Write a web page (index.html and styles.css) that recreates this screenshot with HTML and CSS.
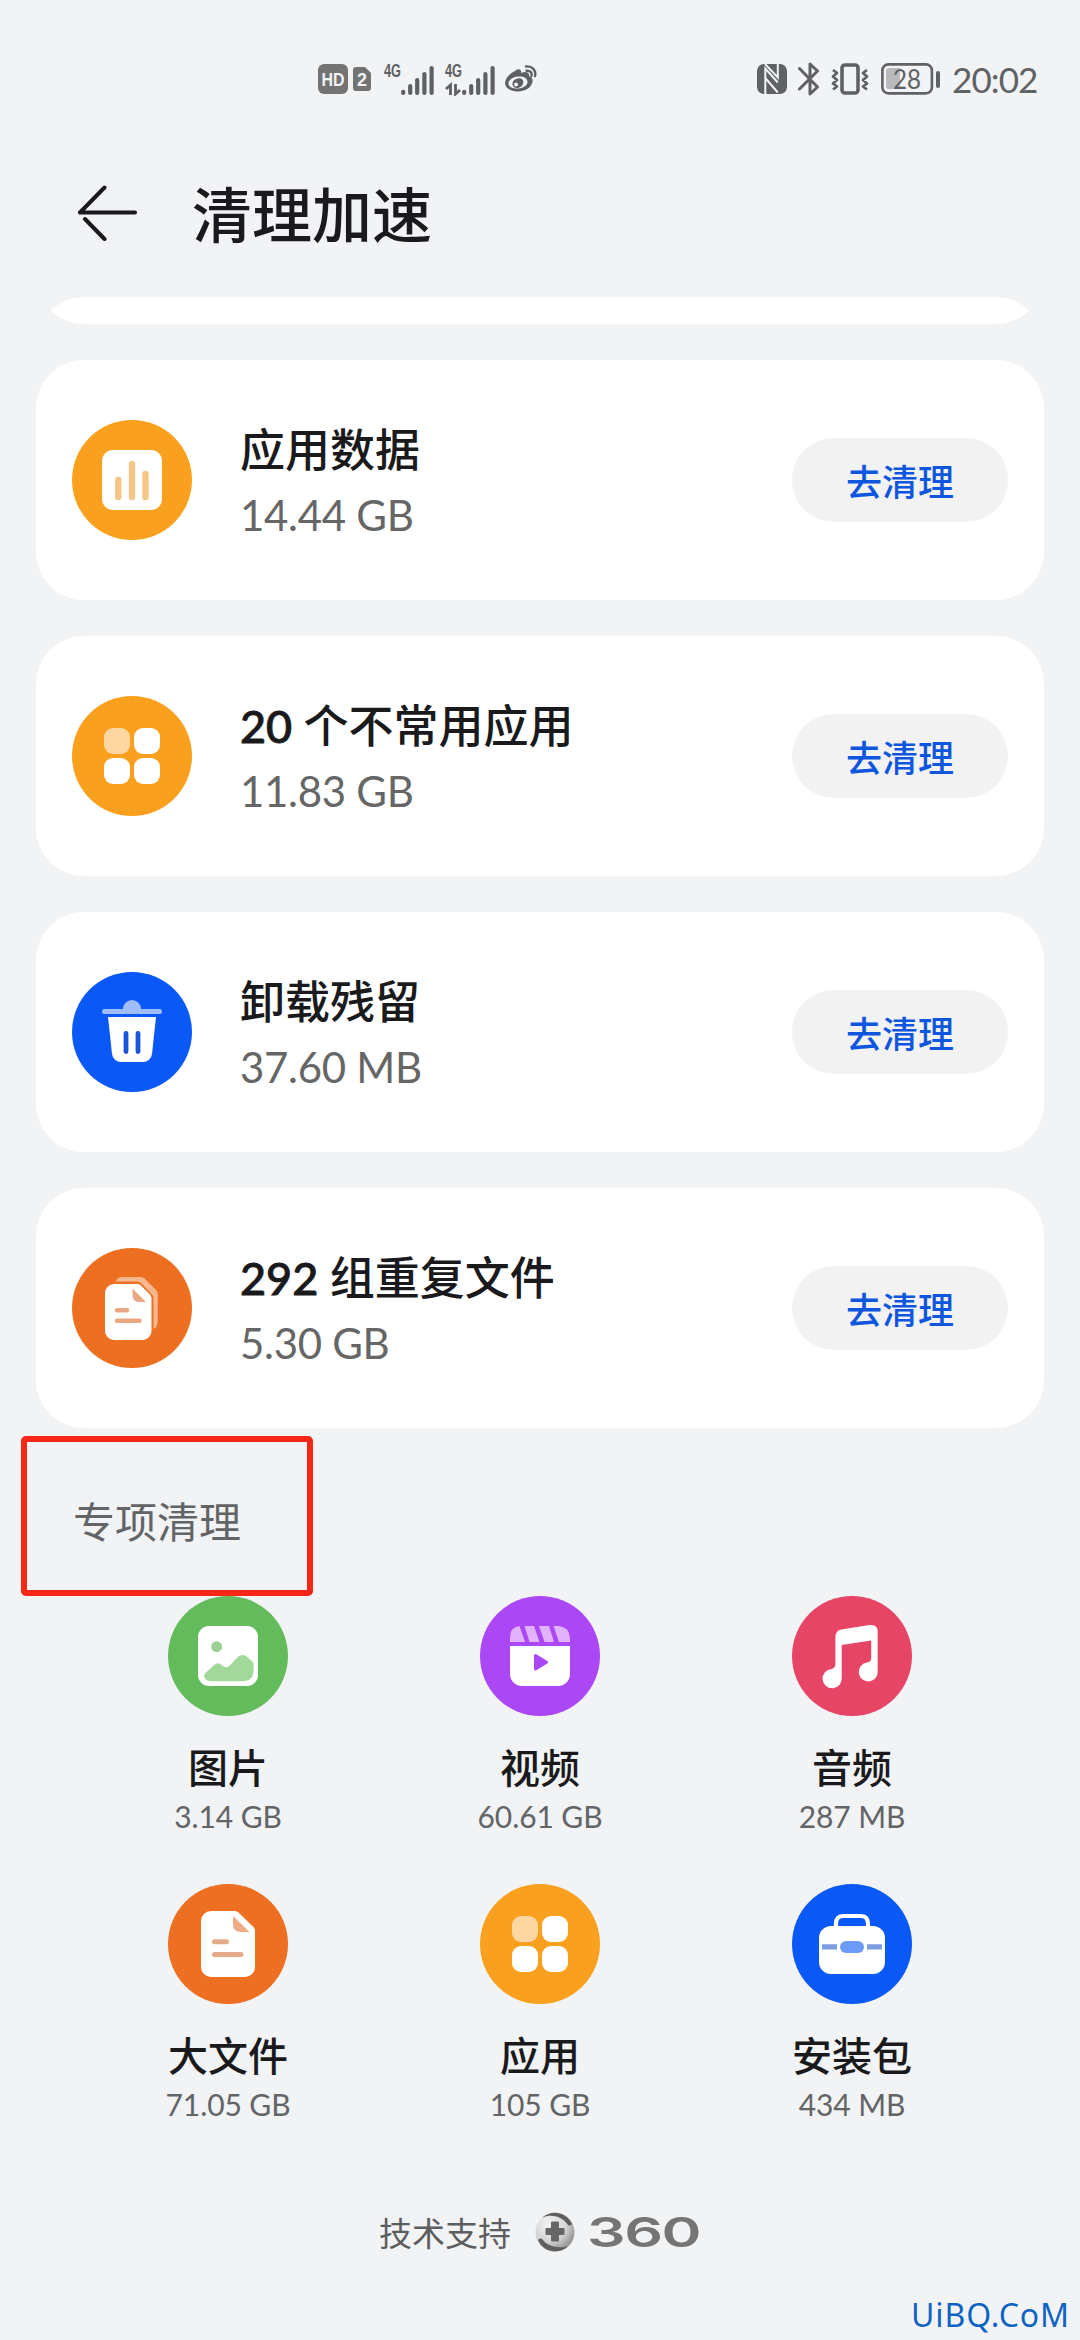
FILE: index.html
```html
<!DOCTYPE html>
<html lang="zh-CN">
<head>
<meta charset="utf-8">
<title>清理加速</title>
<link rel="stylesheet" href="styles.css">
</head>
<body>
<svg class="defs" width="0" height="0" aria-hidden="true">
  <symbol id="apps" viewBox="0 0 120 120">
    <rect x="32" y="32" width="26" height="26" rx="9" fill="#fdd6a2"/>
    <rect x="62" y="32" width="26" height="26" rx="9" fill="#fff"/>
    <rect x="32" y="62" width="26" height="26" rx="9" fill="#fff"/>
    <rect x="62" y="62" width="26" height="26" rx="9" fill="#fff"/>
  </symbol>
  <symbol id="bars" viewBox="0 0 33 32">
    <path d="M2.2 27.8v1.2M9.2 22.2v6.8M16.2 16v13M23.4 10v19M30.6 4v25" stroke="#5f6062" stroke-width="4.2" stroke-linecap="round"/>
  </symbol>
</svg>
<div class="screen">
  <header class="status">
    <div class="status-left">
      <svg width="30" height="30" viewBox="0 0 30 30"><rect width="30" height="30" rx="6" fill="#737373"/><text x="15" y="22" class="hd" text-anchor="middle" textLength="23" lengthAdjust="spacingAndGlyphs">HD</text></svg>
      <svg class="sim" width="18" height="24" viewBox="0 0 18 24"><path d="M3 0h9l6 6v15a3 3 0 0 1-3 3H3a3 3 0 0 1-3-3V3a3 3 0 0 1 3-3z" fill="#737373"/><text x="9" y="19" class="simno" text-anchor="middle">2</text></svg>
      <svg class="net" width="50" height="34" viewBox="0 0 50 34"><text x="0" y="15" class="g4" textLength="17" lengthAdjust="spacingAndGlyphs">4G</text><use href="#bars" x="17" y="2" width="33" height="32"/></svg>
      <svg class="net2" width="50" height="34" viewBox="0 0 50 34"><text x="0" y="15" class="g4" textLength="17" lengthAdjust="spacingAndGlyphs">4G</text><path d="M1 27l4.500-4v10M10.500 22v10l4.500-4" fill="none" stroke="#5f6062" stroke-width="2.800"/><use href="#bars" x="17" y="2" width="33" height="32"/></svg>
      <svg class="weibo" width="32" height="28" viewBox="0 0 32 28"><path fill-rule="evenodd" fill="#5f6062" d="M10 6C13 3 17 4 16 8c4-2 9-1 8 3 3 1 4 3 3.500 6C26 23 20 26.500 13 26.500 6 26.500 0 23 0 18 0 14 5 8 10 6zM13 11.500C7.500 12 3.500 15 3.500 18.500S8 24 13.500 23.500 23 20 22.500 16.500 18.500 11 13 11.500z"/><path fill-rule="evenodd" fill="#5f6062" d="M13 13.500c3-.8 5.500 1 5.300 4S15 23 12 23s-5-2.200-4.500-5 2.500-4 5.500-4.500zM11 17.500a2 2 0 1 0 .1 4 2 2 0 0 0-.1-4z"/><path d="M21 1.500c6-1 10.500 4 9 9.500M21.500 5.800c3.500-.6 5.800 2 5 5" fill="none" stroke="#5f6062" stroke-width="2.400" stroke-linecap="round"/></svg>
    </div>
    <div class="status-right">
      <svg width="30" height="30" viewBox="0 0 30 30"><rect width="30" height="30" rx="7" fill="#606163"/><path d="M8.300 30V4.500l12.500 14M8 0l12.800 13.500V0M8.300 14l12.500 14.500" fill="none" stroke="#f1f3f5" stroke-width="2"/></svg>
      <svg class="bt" width="22" height="34" viewBox="0 0 22 34"><path d="M1.500 6.500L19.500 25l-7.500 7V2l7.500 7L1.500 27" fill="none" stroke="#606163" stroke-width="3" stroke-linejoin="round" stroke-linecap="round"/></svg>
      <svg class="vib" width="38" height="32" viewBox="0 0 38 32"><rect x="11" y="2" width="16" height="28" rx="3" fill="none" stroke="#606163" stroke-width="3.600"/><path d="M2 7l4 3-4 3.500 4 3.500-4 3.500 4 3-4 3M36 7l-4 3 4 3.500-4 3.500 4 3.500-4 3 4 3" fill="none" stroke="#606163" stroke-width="2.800" stroke-linejoin="round"/></svg>
      <svg class="bat" width="60" height="32" viewBox="0 0 60 32"><rect x="1.400" y="1.400" width="49.500" height="29" rx="6" fill="none" stroke="#606163" stroke-width="2.600"/><path d="M8 5h11v21H8a3 3 0 0 1-3-3V8a3 3 0 0 1 3-3z" fill="#b9babb"/><rect x="55" y="8" width="4" height="17" rx="2" fill="#606163"/><text x="26" y="25.500" class="pct" text-anchor="middle" textLength="28" lengthAdjust="spacingAndGlyphs">28</text></svg>
      <span class="time">20:02</span>
    </div>
  </header>

  <div class="titlebar">
    <svg width="60" height="56" viewBox="0 0 60 56"><path d="M27.500 2.500L3 27.500h55M8 34l19.500 20" fill="none" stroke="#1a1a1c" stroke-width="4" stroke-linecap="round" stroke-linejoin="round"/></svg>
    <h1>清理加速</h1>
  </div>

  <main class="list">
    <section class="card card-cut"></section>
    <section class="card">
      <svg class="icon amber" viewBox="0 0 120 120"><rect x="30" y="30" width="60" height="60" rx="11" fill="#fff"/><path d="M46.300 60v17M60 44v33M73.500 54v23" stroke="#f4c787" stroke-width="6.400" stroke-linecap="round"/></svg>
      <div class="info"><h2>应用数据</h2><p>14.44 GB</p></div>
      <button>去清理</button>
    </section>
    <section class="card">
      <svg class="icon amber" viewBox="0 0 120 120"><use href="#apps"/></svg>
      <div class="info"><h2><span class="num">20</span> 个不常用应用</h2><p>11.83 GB</p></div>
      <button>去清理</button>
    </section>
    <section class="card">
      <svg class="icon blue" viewBox="0 0 120 120"><path d="M32.500 37H51a9 9 0 0 1 18 0h18.500a2.500 2.500 0 0 1 0 5h-55a2.500 2.500 0 0 1 0-5z" fill="#a0bdfb"/><path d="M36 45h48l-4 37a9 9 0 0 1-9 8H49a9 9 0 0 1-9-8z" fill="#fff"/><path d="M54 61.500v18M66 61.500v18" stroke="#1a55dc" stroke-width="4.800" stroke-linecap="round"/></svg>
      <div class="info"><h2>卸载残留</h2><p>37.60 MB</p></div>
      <button>去清理</button>
    </section>
    <section class="card">
      <svg class="icon orange" viewBox="0 0 120 120"><path d="M43.500 33.500q2-4.500 7-4.500H69q2 0 3.500 1.500L84 42q1.700 1.700 1.700 4v26q0 7-4.200 9V50q0-2-1.500-3.500L69 35q-1.500-1.500-4-1.500z" fill="#f7b78f"/><path d="M42 36h23.500q2 0 3.400 1.400L78 46.500q1.500 1.500 1.500 3.500v33a9 9 0 0 1-9 9H42a9 9 0 0 1-9-9V45a9 9 0 0 1 9-9z" fill="#fff"/><path d="M60.500 40.500L74 54h-7q-6.500 0-6.500-6.500zM45 60h10a2.200 2.200 0 0 1 0 4.400H45A2.200 2.200 0 0 1 45 60zM45 70.500h22.500a2.200 2.200 0 0 1 0 4.400H45a2.200 2.200 0 0 1 0-4.400z" fill="#e9a882"/></svg>
      <div class="info"><h2><span class="num">292</span> 组重复文件</h2><p>5.30 GB</p></div>
      <button>去清理</button>
    </section>
  </main>

  <h3 class="section-title">专项清理</h3>

  <div class="grid">
    <div class="cell">
      <svg class="icon green" viewBox="0 0 120 120"><rect x="30" y="30" width="60" height="60" rx="11" fill="#fff"/><circle cx="48.700" cy="50.700" r="5.500" fill="#9bcf94"/><path d="M37 77.500l9-8.500q4-3.500 8 .3 4 4 8 0l7.500-8q5-4.500 10 0l5 4.500q1 1 1 3v6q0 10-9.500 10.500H44q-6 0-7.500-3.800-.8-2 .5-4z" fill="#a2d89a"/></svg>
      <h4>图片</h4><p>3.14 GB</p>
    </div>
    <div class="cell">
      <svg class="icon purple" viewBox="0 0 120 120"><path d="M39.500 30l5.500 16H30v-4q0-11 9.500-12zM44.500 30H54l5.500 16H49.500zM59 30h10l5 16H64.500zM73.500 30H79q10 1 11 12v4H79z" fill="#e0b3fc"/><path d="M30 50h60v28a12 12 0 0 1-12 12H42a12 12 0 0 1-12-12z" fill="#fff"/><path d="M55.500 59.500v13.500l11-6.800z" fill="#ab47f5" stroke="#ab47f5" stroke-width="3" stroke-linejoin="round"/></svg>
      <h4>视频</h4><p>60.61 GB</p>
    </div>
    <div class="cell">
      <svg class="icon red" viewBox="0 0 120 120"><path d="M43.400 41q0-6.500 6-7.500l28-4.400q8.300-1 8.300 6.400V75a9.500 9.500 0 1 1-10.500-8.500q4-.8 4-4.500V44.500L49.700 49v32.500a9.600 9.600 0 1 1-10-8.500q3.700-1.500 3.700-4.500z" fill="#fff"/></svg>
      <h4>音频</h4><p>287 MB</p>
    </div>
    <div class="cell">
      <svg class="icon orange" viewBox="0 0 120 120"><path d="M43 27h24q2 0 3.500 1.500l15 14.500q1.500 1.500 1.500 3.500V83a10 10 0 0 1-10 10H43a10 10 0 0 1-10-10V37a10 10 0 0 1 10-10z" fill="#fff"/><path d="M65 32l16.500 16H73q-8 0-8-8z" fill="#f0ab84"/><path d="M46.500 57.700h12M46.500 70.600H73" stroke="#e3ab87" stroke-width="5" stroke-linecap="round"/></svg>
      <h4>大文件</h4><p>71.05 GB</p>
    </div>
    <div class="cell">
      <svg class="icon amber" viewBox="0 0 120 120"><use href="#apps"/></svg>
      <h4>应用</h4><p>105 GB</p>
    </div>
    <div class="cell">
      <svg class="icon blue" viewBox="0 0 120 120"><path d="M44 44v-4.500q0-7.500 7.500-7.500h17q7.500 0 7.500 7.500V44" fill="none" stroke="#fff" stroke-width="4.200"/><rect x="27" y="42" width="66" height="48" rx="12" fill="#fff"/><path d="M30 60.300h15v5.200H30zM75 60.300h15v5.200H75z" fill="#7c9de0"/><rect x="48" y="57" width="24" height="12" rx="6" fill="#6c9bf9"/></svg>
      <h4>安装包</h4><p>434 MB</p>
    </div>
  </div>

  <footer>
    <span class="support">技术支持</span>
    <svg width="40" height="40" viewBox="0 0 40 40">
      <defs><radialGradient id="ball" cx=".35" cy=".3" r=".75"><stop offset="0" stop-color="#f6f6f6"/><stop offset=".6" stop-color="#d2d2d2"/><stop offset="1" stop-color="#8d8d8d"/></radialGradient></defs>
      <circle cx="20" cy="20" r="19.500" fill="url(#ball)"/>
      <path d="M7 5.500C17-3 32 0 37 12q-2 2.500-4 1C27 4 16 2 7 5.500z" fill="#5e5e5e"/>
      <path d="M33 34.500C23 43 8 40 3 28q2-2.500 4-1 8 11 26 7.500z" fill="#5e5e5e"/>
      <path d="M17 9.500h6q1 0 1 1V16h4.500q1 0 1 1v5q0 1-1 1H24v5.500q0 1-1 1h-6q-1 0-1-1V23h-4.500q-1 0-1-1v-5q0-1 1-1H16v-5.500q0-1 1-1z" fill="#666"/>
    </svg>
    <span class="brand"><span>360</span></span>
  </footer>
  <div class="highlight"></div>
  <div class="watermark">UiBQ.CoM</div>
</div>
</body>
</html>
```
FILE: styles.css
```css
* { box-sizing: border-box; margin: 0; padding: 0; }
body {
  background: #f1f3f5;
  font-family: Lato, "Noto Sans CJK SC", sans-serif;
  color: #1a1a1c;
}
svg { display: block; flex: none; }
h1, h2, h3, h4 { font-weight: 500; }
.defs { position: absolute; }
.screen { position: relative; width: 1080px; height: 2340px; overflow: hidden; }

.status { display: flex; justify-content: space-between; height: 156px; padding: 59px 44px 0 318px; }
.status-left, .status-right { display: flex; align-items: center; height: 39px; }
.sim { margin-left: 5px; }
.net { margin-left: 13px; }
.net2 { margin-left: 11px; }
.weibo { margin-left: 10px; }
.hd { font: bold 18px "Liberation Sans", sans-serif; fill: #f1f3f5; }
.simno { font: bold 18px "Liberation Sans", sans-serif; fill: #f1f3f5; }
.g4 { font: bold 18px "Liberation Sans", sans-serif; fill: #5f6062; }
.pct { font: 27px Lato, sans-serif; fill: #606163; }
.bt { margin-left: 11px; }
.vib { margin-left: 11px; }
.bat { margin-left: 12px; }
.time { margin-left: 11px; width: 84px; font-size: 35px; letter-spacing: -0.9px; line-height: 40px; color: #606163; white-space: nowrap; }

.titlebar { display: flex; align-items: center; height: 114px; padding-left: 77px; }
.titlebar h1 { margin-left: 55px; padding-top: 3px; font-size: 60px; line-height: 80px; }

.list {
  display: flex; flex-direction: column; gap: 36px;
  margin: 27px 36px 0; height: 1131px;
  border-radius: 48px 48px 0 0; overflow: hidden;
}
.card {
  flex: none; display: flex; align-items: center;
  height: 240px; padding: 0 36px;
  background: #fff; border-radius: 48px;
}
.card-cut { margin-top: -213px; }
.icon { width: 120px; height: 120px; border-radius: 50%; }
.amber { background: #f9a11e; }
.blue { background: #0a59f7; }
.orange { background: #ed6f21; }
.green { background: #64bb5c; }
.purple { background: #ab47f5; }
.red { background: #e64566; }
.info { flex: 1; margin-left: 48px; padding-top: 5px; }
.info h2 { font-size: 45px; line-height: 65px; }
.info p { font-size: 42px; line-height: 65px; letter-spacing: -0.3px; color: #666; }
.num { -webkit-text-stroke: 0.9px #1a1a1c; }
button {
  width: 216px; height: 84px; border: 0; border-radius: 42px;
  background: #f2f2f2; color: #0f56df;
  font: 500 36px Lato, "Noto Sans CJK SC", sans-serif;
}

.section-title { height: 168px; padding: 62px 0 0 73px; font-size: 42px; line-height: 64px; font-weight: 400; color: #636466; }
.grid { display: grid; grid-template-columns: repeat(3, 312px); grid-auto-rows: 288px; padding: 0 72px; }
.cell { display: flex; flex-direction: column; align-items: center; }
.cell h4 { margin-top: 23px; font-size: 40px; line-height: 58px; }
.cell p { font-size: 30px; line-height: 38px; letter-spacing: -0.1px; color: #636466; }

footer { display: flex; align-items: center; height: 60px; margin-top: 30px; padding-left: 379px; }
.support { width: 156px; font-size: 33px; color: #5c5d5f; }
.brand { width: 116px; margin-left: 12px; }
.brand span {
  display: inline-block; transform: scaleX(1.48); transform-origin: 0 50%;
  font: 600 41px/42px Inter, sans-serif; letter-spacing: -1px; color: #757575;
}
.highlight { position: absolute; left: 21px; top: 1436px; width: 292px; height: 160px; border: 6px solid #f72717; border-radius: 5px; }
.watermark {
  position: absolute; right: 10px; bottom: 4px;
  font: 32px/42px "Noto Sans", sans-serif; letter-spacing: 0.9px; color: #0d63c4; white-space: nowrap;
  text-shadow: 0 0 2px #fff;
}
```
